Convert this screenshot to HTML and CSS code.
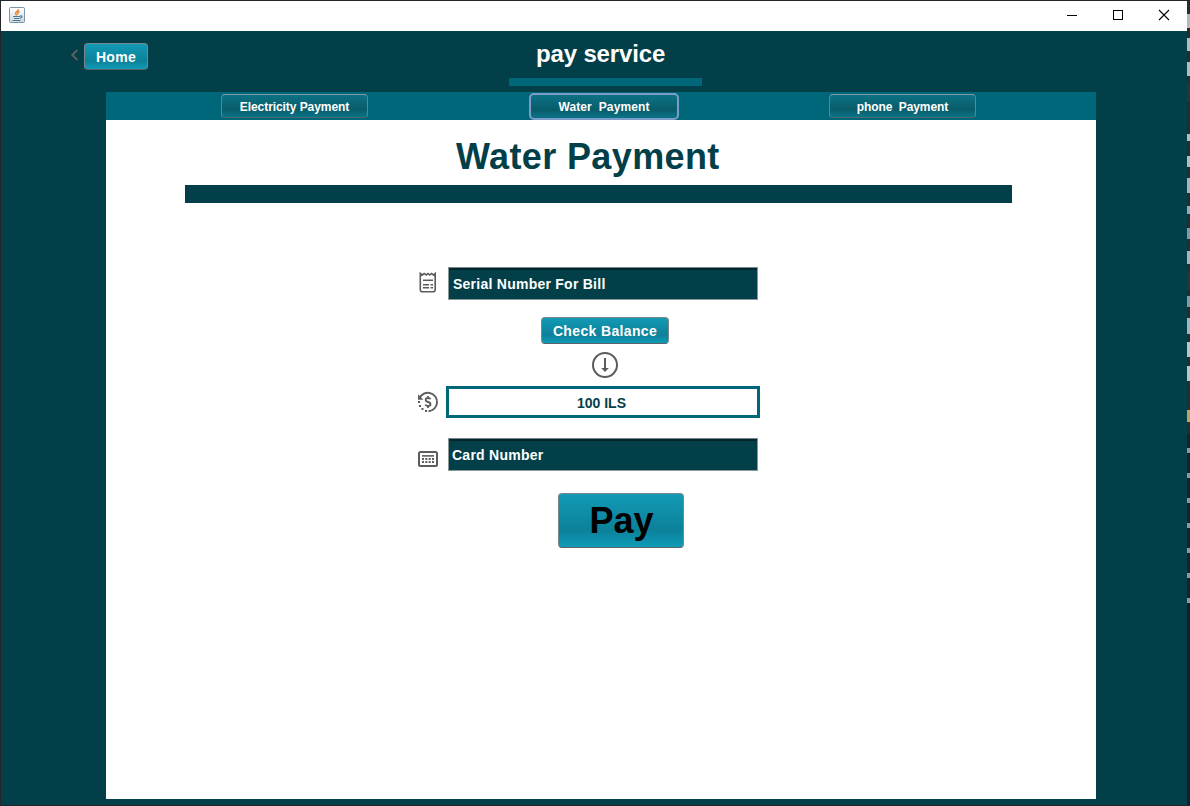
FILE: index.html
```html
<!DOCTYPE html>
<html lang="en">
<head>
<meta charset="utf-8">
<title>pay service</title>
<link rel="stylesheet" href="styles.css">
</head>
<body>
<div class="desktop">
  <div class="window">
    <header class="titlebar">
      <svg class="java" width="16" height="16" viewBox="0 0 16 16">
        <defs><linearGradient id="jg" x1="0" y1="0" x2="0" y2="1"><stop offset="0" stop-color="#fff"/><stop offset="1" stop-color="#cbd8e2"/></linearGradient></defs>
        <rect x=".5" y=".5" width="15" height="15" rx="1" fill="url(#jg)" stroke="#7e95a7"/>
        <path d="M9.500 2.200C10 4 6 4.800 6.500 6.500Q7 7.500 7.700 8.500M10.500 4.500Q7.500 5.800 9 7.500" fill="none" stroke="#e8862c" stroke-width="1.400"/>
        <path d="M4 9.500H11M5 11.500H10.500M3.500 13.500H11.500M11 9Q14 8.500 12.500 10.500L11 11.300" fill="none" stroke="#4f7894" stroke-width="1.200"/>
      </svg>
      <div class="controls">
        <svg width="12" height="12" viewBox="0 0 12 12"><path d="M1 6.500H11" stroke="#000"/></svg>
        <svg width="12" height="12" viewBox="0 0 12 12"><rect x="1.500" y="1.500" width="9" height="9" fill="none" stroke="#000"/></svg>
        <svg width="12" height="12" viewBox="0 0 12 12"><path d="M1 1L11 11M11 1L1 11" stroke="#000" stroke-width="1.100"/></svg>
      </div>
    </header>
    <div class="top">
      <nav class="back">
        <svg width="8" height="12" viewBox="0 0 8 12"><path d="M7.300 1L2.300 6L7.300 11" fill="none" stroke="#5c5c5c" stroke-width="2"/></svg>
        <button class="btn home">Home</button>
      </nav>
      <div class="heading">
        <h1>pay service</h1>
        <div class="underline"></div>
      </div>
    </div>
    <main class="panel">
      <div class="tabs">
        <button class="tab">Electricity Payment</button>
        <button class="tab active">Water  Payment</button>
        <button class="tab phone">phone  Payment</button>
      </div>
      <h2>Water Payment</h2>
      <div class="rule"></div>
      <form class="form">
        <div class="row serial">
          <svg width="20" height="22" viewBox="0 0 20 22" fill="none" stroke="#5c5c5c" stroke-width="1.600">
            <path d="M3.300 1.500L5.300 3L7.300 1.500L9.100 3L11 1.500L12.700 3L14.500 1.500L16.500 3L18.200 1.500V17.500Q18.200 19.800 16 19.800H5.600Q3.300 19.800 3.300 17.500Z"/>
            <path d="M6 8.300H16M6 12.700H12M13.500 12.700H16M6 15.800H12M13.500 15.800H16"/>
          </svg>
          <div class="field">Serial Number For Bill</div>
        </div>
        <button class="btn check" type="button">Check Balance</button>
        <svg class="down" width="26" height="26" viewBox="0 0 26 26" fill="none" stroke="#5c5c5c">
          <circle cx="13" cy="13" r="12" stroke-width="2"/>
          <path d="M13 6V17" stroke-width="2"/><path d="M9.200 16H16.800L13 20Z" fill="#5c5c5c" stroke="none"/>
        </svg>
        <div class="row amount">
          <svg width="22" height="22" viewBox="0 0 22 22" fill="none" stroke="#5c5c5c" stroke-width="1.900">
            <path d="M2.500 7.200A9.200 9.200 0 1 1 11.500 20.200"/>
            <path d="M1 3.300V8.700H6.400Z" fill="#5c5c5c" stroke="none"/>
            <path d="M13.500 8.300Q13 7 11 7Q8.700 7 8.700 8.800Q8.700 10.500 11 11Q13.500 11.500 13.500 13.300Q13.500 15 11 15Q8.900 15 8.400 13.500M11 5V7M11 15V17" stroke-width="1.800"/>
            <g fill="#5c5c5c" stroke="none"><rect x="1" y="10" width="2" height="2"/><rect x="2" y="14" width="2" height="2"/><rect x="4.500" y="17" width="2" height="2"/><rect x="8" y="19" width="2" height="2"/></g>
          </svg>
          <div class="output">100 ILS</div>
        </div>
        <div class="row card">
          <svg width="20" height="16" viewBox="0 0 20 16" fill="none" stroke="#5c5c5c">
            <rect x="1" y="1" width="18" height="14" rx="1.500" stroke-width="2"/>
            <path d="M4 4.900H16" stroke-width="1.600"/><path d="M4 8H16M4 11H16" stroke-width="2" stroke-dasharray="2 1.330"/>
          </svg>
          <div class="field">Card Number</div>
        </div>
        <button class="btn pay" type="button">Pay</button>
      </form>
    </main>
  </div>
  <div class="edge"></div>
</div>
</body>
</html>
```
FILE: styles.css
```css
* { box-sizing: border-box; }
body { margin: 0; background: #25262b; font-family: "Liberation Sans", Arial, sans-serif; font-weight: bold; }
svg { display: block; flex: none; }
.desktop { width: 1190px; height: 806px; padding: 1px 0 1px 1px; display: flex; overflow: hidden; }
.window { width: 1186px; height: 804px; background: #033f49; display: flex; flex-direction: column; }
.titlebar { height: 30px; flex: none; background: #fff; display: flex; justify-content: space-between; padding: 6px 17px 0 8px; }
.controls { display: flex; gap: 34px; padding-top: 2px; }
.top { height: 61px; flex: none; display: flex; }
.back { width: 508px; display: flex; align-items: flex-start; padding: 12px 0 0 69px; gap: 6px; }
.back svg { margin-top: 6px; }
.heading { width: 193px; }
h1 { margin: 0; height: 47px; padding-left: 27px; font-size: 24px; line-height: 46px; color: #fff; white-space: nowrap; letter-spacing: -.15px; }
.underline { height: 8px; background: #00677b; }
button { font: inherit; padding: 0; margin: 0; white-space: pre; }
.btn { border: 1px solid #79878c; border-bottom-color: #596268; border-radius: 4px; color: #fff; font-size: 14px; background: linear-gradient(#139ab5, #0c819a 68%, #109bb7); }
.home { width: 64px; height: 27px; letter-spacing: .3px; }
.panel { width: 990px; height: 707px; margin-left: 105px; background: #fff; }
.tabs { height: 28px; background: #00677b; display: flex; align-items: flex-start; padding: 2px 0 0 115px; }
.tab { width: 147px; height: 24px; padding-top: 1px; border: 1px solid #5c8791; border-top-color: #839ba3; border-bottom-color: #4d666f; border-radius: 4px; color: #fff; font-size: 12px; letter-spacing: -.07px; background: linear-gradient(#0c7285, #095c6a 65%, #0b7487); }
.tab.active { width: 150px; height: 27px; margin: -1px 0 0 161px; padding: 0; border: 2px solid #7b9cc9; border-radius: 5px; letter-spacing: .1px; }
.tab.phone { margin-left: 150px; letter-spacing: -.1px; }
h2 { margin: 0 0 0 350px; height: 65px; font-size: 36px; line-height: 73px; color: #033f49; letter-spacing: .38px; white-space: nowrap; }
.rule { width: 827px; height: 18px; margin-left: 79px; background: #033f49; }
.form { width: 350px; margin: 64px 0 0 311px; display: flex; flex-direction: column; }
.row { display: flex; align-items: flex-start; }
.field { width: 310px; height: 33px; padding-left: 4px; line-height: 33px; font-size: 14px; letter-spacing: .25px; color: #fff; background: #033f49; border: 1px solid #8d9999; border-top-color: #75878a; box-shadow: inset 0 2px #03252b; }
.serial svg { margin-top: 5px; }
.serial .field { margin-left: 11px; }
.check { width: 128px; height: 27px; margin: 17px 0 0 124px; letter-spacing: .35px; }
.down { margin: 8px 0 0 175px; }
.amount { margin-top: 8px; }
.amount svg { margin-top: 5px; }
.output { width: 314px; height: 32px; margin-left: 7px; border: 3px solid #00677b; text-align: center; font-size: 14px; line-height: 28px; color: #033f49; padding-right: 3px; }
.card { margin-top: 20px; }
.card svg { margin: 13px 0 0 1px; }
.card .field { margin-left: 10px; padding-left: 3px; }
.pay { width: 126px; height: 55px; margin: 22px 0 0 141px; padding: 1px 0 0 1px; font-size: 36px; color: #000; }
.edge { width: 3px; height: 804px; background: linear-gradient(#333237, #333237) 0 82px / 3px 19px no-repeat, linear-gradient(#333237, #333237) 0 270px / 3px 19px no-repeat, repeating-linear-gradient(#2b2b2f 0 13px, #b4bcc2 13px 27px, #2b2b2f 27px 37px, #b4bcc2 37px 50px, #2b2b2f 50px 61px, #b4bcc2 61px 75px, #2b2b2f 75px 133px, #b4bcc2 133px 140px, #2b2b2f 140px 155px, #b4bcc2 155px 166px, #2b2b2f 166px 177px, #a4b4c2 177px 192px, #2b2b2f 192px 205px, #8fabc0 205px 213px, #2b2b2f 213px 227px, #7b9cb0 227px 238px, #2b2b2f 238px 250px, #a4b4c2 250px 263px, #2b2b2f 263px 295px, #8198ad 295px 306px, #2b2b2f 306px 317px, #9fb6c9 317px 333px, #2b2b2f 333px 341px, #bfc3c3 341px 356px, #2b2b2f 356px 365px, #bfc3c3 365px 380px, #2b2b2f 380px 409px, #b7a65b 409px 421px, #2b2b2f 421px 433px) 0 0 / 3px 433px no-repeat, repeating-linear-gradient(#19212f 0 14px, #8798ab 14px 19px, #19212f 19px 25px) 0 433px / 3px 170px no-repeat, #161e2d; }
```
